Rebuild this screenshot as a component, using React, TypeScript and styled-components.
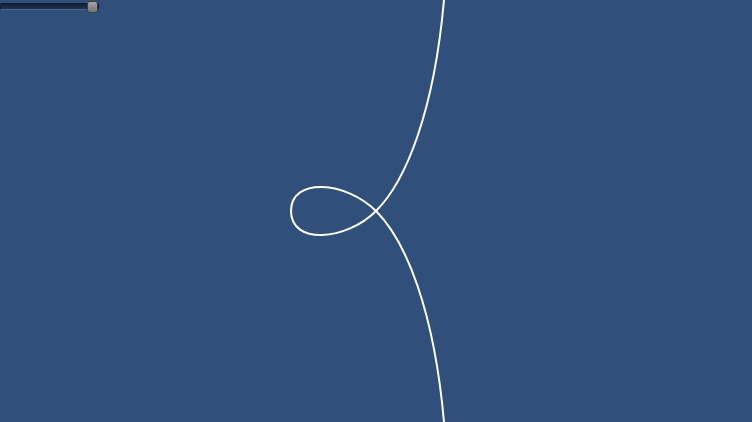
import React from 'react'
import styled, { createGlobalStyle } from 'styled-components'

const GlobalStyle = createGlobalStyle`
  html, body {
    margin: 0;
    padding: 0;
    overflow: hidden;
    background: #314f7b;
    font-family: "Liberation Sans", Arial, sans-serif;
  }
`

// the loop, drawn as four cubic pieces, mirrored around y = 211
const loopPath = [
  'M444,0',
  'C434,112 406,181 376,211',
  'C346,241 291,245 291,211',
  'C291,177 346,181 376,211',
  'C406,241 434,310 444,422',
].join(' ')

const Page = styled.div`
  position: relative;
  width: 100vw;
  height: 100vh;
  background: #314f7b;
`

const Canvas = styled.svg`
  position: absolute;
  inset: 0;
  width: 100%;
  height: 100%;
  display: block;
`

const Range = styled.input`
  position: absolute;
  top: 0;
  left: 0;
  margin: 0;
  width: 99px;
  height: 12px;
  background: transparent;
  -webkit-appearance: none;
  appearance: none;

  &::-webkit-slider-runnable-track {
    height: 7px;
    box-sizing: border-box;
    border: 1px solid #0f1b2e;
    border-bottom-color: #4a6690;
    border-radius: 2px;
    background: linear-gradient(#14213a, #1f3252);
  }

  &::-webkit-slider-thumb {
    -webkit-appearance: none;
    appearance: none;
    width: 11px;
    height: 12px;
    margin-top: -3px;
    box-sizing: border-box;
    border: 1px solid #3a3f47;
    border-radius: 3px;
    background: linear-gradient(#a8a8a8, #8a8a8a 50%, #767676);
  }
`

export default function App() {
  return (
    <Page>
      <GlobalStyle />
      <Canvas viewBox="0 0 752 422" preserveAspectRatio="none">
        <path d={loopPath} fill="none" stroke="#ffffff" strokeWidth={2} />
      </Canvas>
      <Range type="range" min={0} max={100} defaultValue={100} readOnly />
    </Page>
  )
}
